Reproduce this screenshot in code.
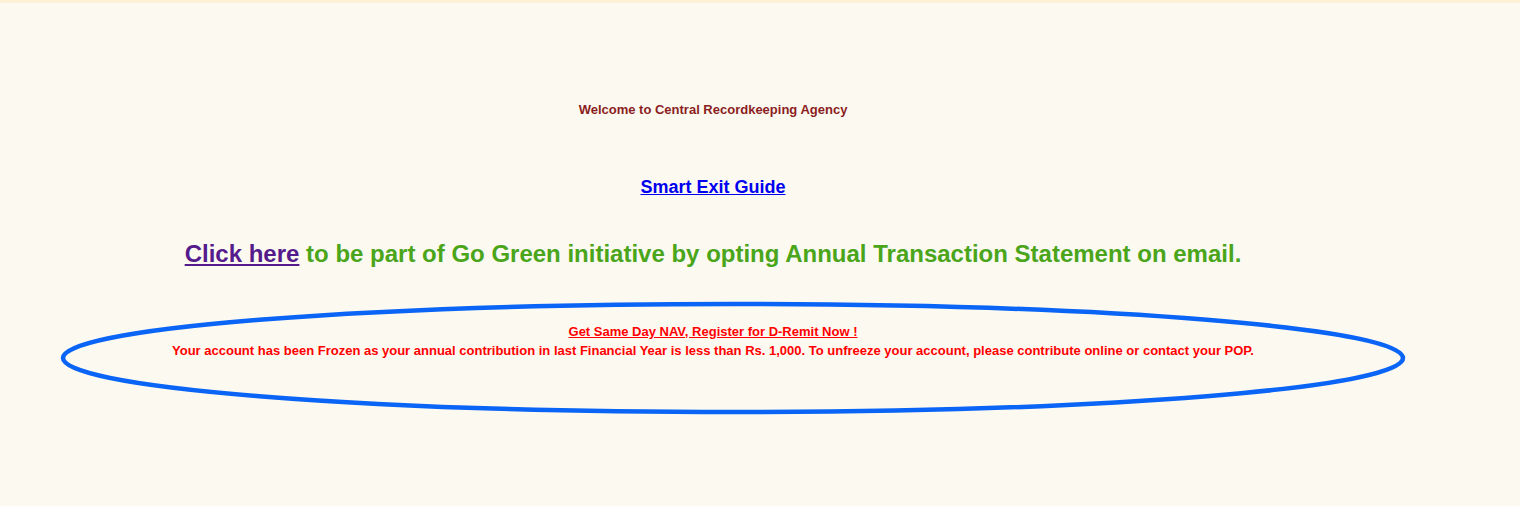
import React from "react";

export default function App() {
  return (
    <div className="min-h-[506px] w-[1520px] bg-[#fcf9f1] font-['Liberation_Sans',Arial,sans-serif]">
      <div className="h-[3px] w-full bg-[#fff1d6]" />
      <div className="w-[1426px] text-center">
        <div className="pt-[99px] text-[13px] font-bold leading-[16px] text-[#8b1e1e]">
          Welcome to Central Recordkeeping Agency
        </div>
        <div className="pt-[59px] text-[18px] font-bold leading-[21px]">
          <a href="#" className="text-[#0000ee] underline">Smart Exit Guide</a>
        </div>
        <div className="pt-[42px] text-[24px] font-bold leading-[28px] text-[#4aa51a]">
          <a href="#" className="text-[#551a8b] underline">Click here</a> to be part of Go Green initiative by opting Annual Transaction Statement on email.
        </div>
        <div className="relative mt-[54px] text-[13px] font-bold leading-[19px] text-[#ff0000]">
          <svg
            className="pointer-events-none absolute left-[60px] top-[-21px]"
            width="1346"
            height="114"
            viewBox="0 0 1346 114"
          >
            <ellipse cx="673" cy="57" rx="670" ry="54" fill="none" stroke="#0a64f5" strokeWidth="4.5" />
          </svg>
          <div>
            <a href="#" className="text-[#ff0000] underline">Get Same Day NAV, Register for D-Remit Now !</a>
          </div>
          <div>
            Your account has been Frozen as your annual contribution in last Financial Year is less than Rs. 1,000. To unfreeze your account, please contribute online or contact your POP.
          </div>
        </div>
      </div>
    </div>
  );
}
